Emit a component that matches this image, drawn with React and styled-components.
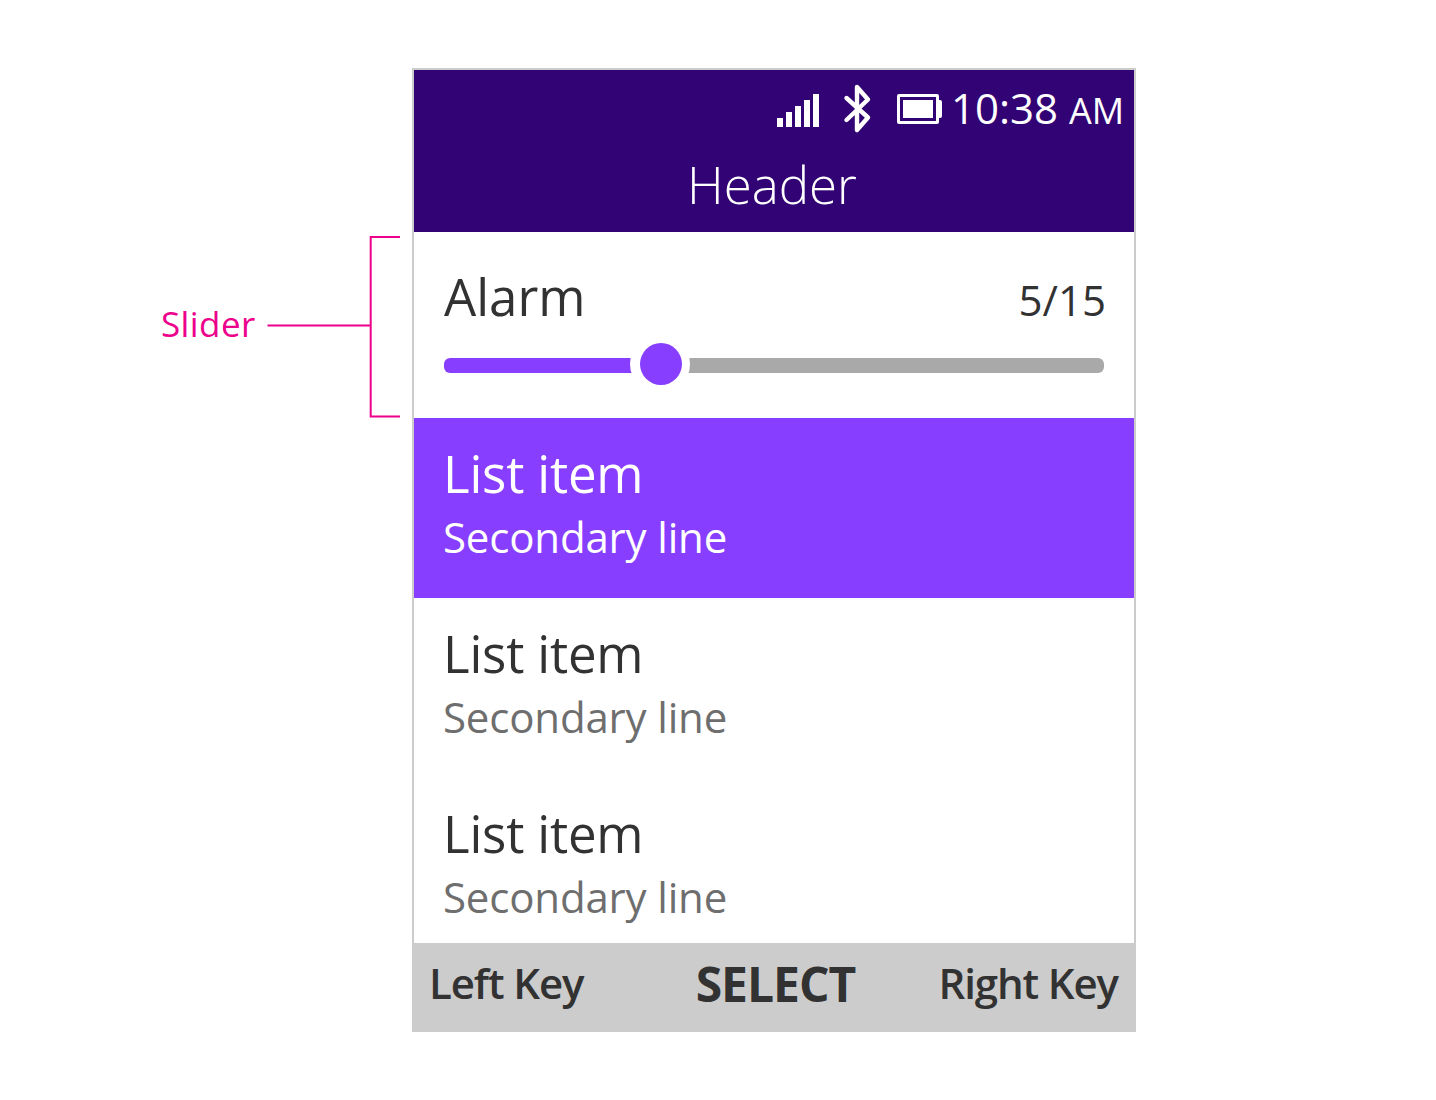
import React from "react";
import styled, { createGlobalStyle } from "styled-components";

const Global = createGlobalStyle`
  * { box-sizing: border-box; }
  body { margin: 0; background: #fff; font-family: "Open Sans", "Noto Sans", sans-serif; }
`;
const Page = styled.main`
  width: 1436px; height: 1100px; display: flex; align-items: flex-start; overflow: hidden;
`;
const Annotation = styled.div`
  width: 412px; height: 182px; margin-top: 236px; padding-left: 161px; display: flex; align-items: flex-start; color: #ec008c;
`;
const AnnotationLabel = styled.span`
  width: 106px; flex: none; font-size: 35px; line-height: 48px; padding-top: 64px; white-space: nowrap; letter-spacing: 0.4px;
`;
const Phone = styled.section`
  width: 724px; height: 964px; margin-top: 68px; border: 2px solid #ccc; display: flex; flex-direction: column; background: #fff;
`;
const Top = styled.header`
  height: 162px; flex: none; background: #320374; color: #fff; display: flex; flex-direction: column;
`;
const Status = styled.div`
  height: 76px; display: flex; justify-content: flex-end; padding-right: 13px;
`;
const Time = styled.span`
  width: 170px; white-space: nowrap; font-size: 42px; line-height: 75px; span { font-size: 36px; }
`;
const Title = styled.h1`
  margin: 0; font-size: 51px; line-height: 76px; font-weight: 300; text-align: center; padding-right: 4px;
`;
const SliderRow = styled.div`
  height: 186px; flex: none; padding: 28px 30px 0; color: #323232;
`;
const SliderText = styled.div`
  height: 74px; display: flex; justify-content: space-between; align-items: baseline;
`;
const Primary = styled.div`
  font-size: 51px; line-height: 72px; white-space: nowrap; letter-spacing: ${(p) => p.$tracking || 0}px;
`;
const Value = styled.div`
  font-size: 42px; line-height: 72px; margin-right: -2px;
`;
const Track = styled.div`
  height: 60px; display: flex; align-items: center;
`;
const Fill = styled.div`
  width: 188px; height: 15px; margin-top: 3px; background: #873eff; border-radius: 6px 0 0 6px;
`;
const KnobRing = styled.div`
  width: 60px; height: 60px; margin: 0 -2px; padding-left: 10px; border-radius: 50%; background: #fff; display: flex; align-items: center; z-index: 1;
`;
const Knob = styled.div`
  width: 42px; height: 42px; border-radius: 50%; background: #873eff;
`;
const Rest = styled.div`
  flex: 1; height: 15px; margin-top: 3px; background: #a9a9a9; border-radius: 0 6px 6px 0;
`;
const Item = styled.div`
  height: 180px; flex: none; padding: 19px 29px; background: ${(p) => (p.$active ? "#873eff" : "#fff")}; color: ${(p) => (p.$active ? "#fff" : "#323232")};
`;
const Secondary = styled.div`
  font-size: 42px; line-height: 55px; color: ${(p) => (p.$active ? "#fff" : "#6e6e6e")}; white-space: nowrap; letter-spacing: -0.17px;
`;
const List = styled.div`
  height: 525px; flex: none; overflow: hidden;
`;
const Keys = styled.footer`
  height: 87px; flex: none; background: #ccc; color: #323232; display: grid; grid-template-columns: 1fr 1fr 1fr; padding: 0 16px 0 15px;
`;
const Key = styled.span`
  font-size: ${(p) => (p.$main ? 48 : 42)}px; line-height: ${(p) => (p.$main ? 81 : 79)}px; font-weight: ${(p) => (p.$main ? 700 : 600)}; text-align: ${(p) => p.$align}; letter-spacing: ${(p) => (p.$main ? -1 : -1.1)}px; padding-left: ${(p) => (p.$main ? 4 : 0)}px; white-space: nowrap;
`;

function StatusIcons() {
  return (
    <svg width="174" height="78" viewBox="0 0 174 78" fill="#fff">
      <path d="M0 48h6v9H0zM9 42h6v15H9zM18 36h6v21h-6zM27 30h6v27h-6zM36 24h6v33h-6z" />
      <path d="M69.5 28l21.5 19.5-11 12.5V17l11 12.5-21.5 20.5" fill="none" stroke="#fff" strokeWidth="4.4" strokeLinejoin="round" strokeLinecap="round" />
      <path d="M122 24h38a2 2 0 0 1 2 2v4h1a2 2 0 0 1 2 2v14a2 2 0 0 1-2 2h-1v4a2 2 0 0 1-2 2h-38a2 2 0 0 1-2-2V26a2 2 0 0 1 2-2zm1 3v24h36V27z" fillRule="evenodd" />
      <path d="M126 30h30v18h-30z" />
    </svg>
  );
}

export default function App() {
  return (
    <Page>
      <Global />
      <Annotation>
        <AnnotationLabel>Slider</AnnotationLabel>
        <svg width="134" height="182" viewBox="0 0 134 182" fill="none" stroke="#ec008c" strokeWidth="2">
          <path d="M133 1H103.7V180.5H133M.5 89.5H104" />
        </svg>
      </Annotation>
      <Phone>
        <Top>
          <Status><StatusIcons /><Time>10:38 <span>AM</span></Time></Status>
          <Title>Header</Title>
        </Top>
        <SliderRow>
          <SliderText><Primary>Alarm</Primary><Value>5/15</Value></SliderText>
          <Track><Fill /><KnobRing><Knob /></KnobRing><Rest /></Track>
        </SliderRow>
        <List>
          {[true, false, false].map((active, i) => (
            <Item key={i} $active={active}>
              <Primary $tracking={-0.2}>List item</Primary>
              <Secondary $active={active}>Secondary line</Secondary>
            </Item>
          ))}
        </List>
        <Keys>
          <Key $align="left">Left Key</Key>
          <Key $align="center" $main>SELECT</Key>
          <Key $align="right">Right Key</Key>
        </Keys>
      </Phone>
    </Page>
  );
}
